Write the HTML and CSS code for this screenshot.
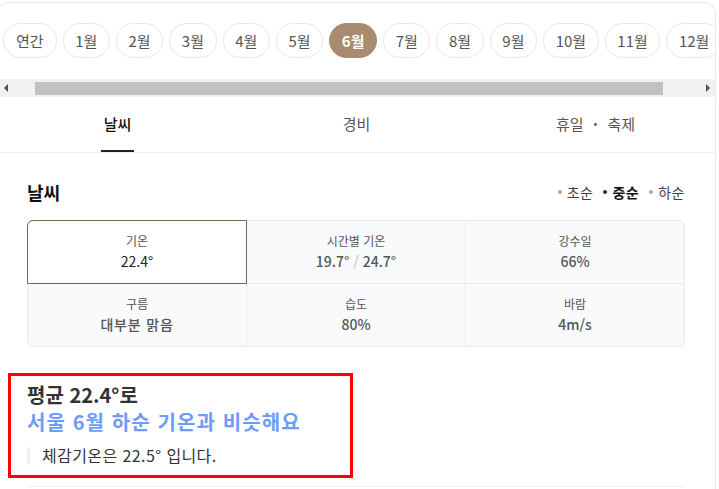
FILE: index.html
```html
<!DOCTYPE html>
<html lang="ko">
<head>
<meta charset="utf-8">
<title>날씨</title>
<link rel="stylesheet" href="styles.css">
</head>
<body>
<div class="panel">
  <div class="months">
    <div class="pills">
      <span class="pill pill-year">연간</span>
      <span class="pill">1월</span>
      <span class="pill">2월</span>
      <span class="pill">3월</span>
      <span class="pill">4월</span>
      <span class="pill">5월</span>
      <span class="pill pill-active">6월</span>
      <span class="pill">7월</span>
      <span class="pill">8월</span>
      <span class="pill">9월</span>
      <span class="pill">10월</span>
      <span class="pill">11월</span>
      <span class="pill">12월</span>
    </div>
  </div>
  <div class="scrollbar">
    <span class="sb-btn"><i class="tri tri-left"></i></span>
    <span class="sb-track"><span class="sb-thumb"></span></span>
    <span class="sb-btn"><i class="tri tri-right"></i></span>
  </div>
  <nav class="tabs">
    <div class="tab"><span class="tab-label tab-active">날씨</span></div>
    <div class="tab"><span class="tab-label">경비</span></div>
    <div class="tab"><span class="tab-label">휴일<span class="sep">·</span>축제</span></div>
  </nav>
  <section class="weather">
    <div class="weather-head">
      <h2 class="title">날씨</h2>
      <ul class="periods">
        <li class="period">초순</li>
        <li class="period period-active">중순</li>
        <li class="period">하순</li>
      </ul>
    </div>
    <div class="stats">
      <div class="cell cell-selected"><span class="label">기온</span><span class="value">22.4°</span></div>
      <div class="cell"><span class="label">시간별 기온</span><span class="value">19.7° <span class="slash">/</span> 24.7°</span></div>
      <div class="cell cell-tr"><span class="label">강수일</span><span class="value">66%</span></div>
      <div class="cell cell-bl"><span class="label">구름</span><span class="value value-wide">대부분 맑음</span></div>
      <div class="cell"><span class="label">습도</span><span class="value">80%</span></div>
      <div class="cell cell-br"><span class="label">바람</span><span class="value">4m/s</span></div>
    </div>
    <div class="summary">
      <p class="summary-line">평균 22.4°로</p>
      <p class="summary-line summary-blue">서울 6월 하순 기온과 비슷해요</p>
      <p class="quote">체감기온은 22.5° 입니다.</p>
    </div>
    <div class="divider"></div>
  </section>
</div>
</body>
</html>
```
FILE: styles.css
```css
html, body {
  margin: 0;
  padding: 0;
  overflow: hidden;
  background: #ffffff;
}
body {
  font-family: "Noto Sans CJK KR", "Noto Sans", sans-serif;
  color: #333;
}
.panel {
  box-sizing: border-box;
  width: 719px;
  min-height: 600px;
  margin: 2px 0 0 -3px;
  border: 1px solid #e6e8eb;
  border-bottom: none;
  border-radius: 12px 12px 0 0;
  background: #fff;
}
.months {
  overflow: hidden;
  padding: 20px 0 21px 5px;
}
.pills {
  display: flex;
  gap: 6px;
  flex-wrap: nowrap;
}
.pill {
  flex: none;
  height: 33px;
  line-height: 33px;
  padding: 0 11.6px;
  border: 1px solid #e8e8e8;
  border-radius: 18px;
  font-size: 15px;
  color: #555;
  background: #fff;
}
.pill-year {
  padding: 0 12px;
}
.pill-active {
  background: #a98b6f;
  border-color: #a98b6f;
  color: #fff;
  font-weight: 700;
}
.scrollbar {
  display: flex;
  height: 18px;
  background: #f1f1f1;
}
.sb-btn {
  flex: none;
  width: 17px;
  display: flex;
  align-items: center;
  justify-content: center;
}
.sb-track {
  flex: 1;
  display: flex;
  align-items: center;
}
.sb-thumb {
  margin-left: 20px;
  width: 628px;
  height: 13px;
  background: #c1c1c1;
}
.tri {
  width: 0;
  height: 0;
  border-top: 4px solid transparent;
  border-bottom: 4px solid transparent;
}
.tri-left {
  border-right: 4px solid #505050;
  margin-right: 2px;
}
.tri-right {
  border-left: 4px solid #505050;
  margin-left: 2px;
}
.tabs {
  display: grid;
  grid-template-columns: 1fr 1fr 1fr;
  height: 55px;
  border-bottom: 1px solid #eceef0;
}
.tab {
  display: flex;
  justify-content: center;
  height: 55px;
}
.tab-label {
  box-sizing: border-box;
  display: flex;
  align-items: center;
  height: 55px;
  padding: 0 3px;
  font-size: 15px;
  color: #555;
  border-bottom: 2px solid transparent;
}
.sep {
  display: inline-block;
  width: 24px;
  text-align: center;
  font-weight: 700;
}
.tab-active {
  color: #111;
  font-weight: 500;
  border-bottom-color: #222;
}
.weather {
  padding: 26px 30px 0 29px;
}
.weather-head {
  display: flex;
  align-items: center;
  justify-content: space-between;
  height: 26px;
}
.title {
  margin: 0;
  font-size: 18px;
  font-weight: 700;
  line-height: 26px;
  color: #111;
}
.periods {
  display: flex;
  gap: 10px;
  margin: 0;
  padding: 0;
  list-style: none;
}
.period {
  display: flex;
  align-items: center;
  font-size: 14px;
  letter-spacing: 0.5px;
  color: #444;
}
.period::before {
  content: "";
  width: 4px;
  height: 4px;
  border-radius: 50%;
  background: #aaa;
  margin-right: 5px;
}
.period-active {
  color: #111;
  font-weight: 700;
}
.period-active::before {
  background: #333;
}
.stats {
  display: grid;
  grid-template-columns: 1fr 1fr 1fr;
  grid-template-rows: 62px 62px;
  gap: 1px;
  margin-top: 15px;
  border: 1px solid #e9eaec;
  border-radius: 6px;
  background: #e9eaec;
}
.cell {
  display: flex;
  flex-direction: column;
  align-items: center;
  justify-content: center;
  gap: 2px;
  background: #f9fafb;
}
.cell-selected {
  position: relative;
  background: #fff;
  outline: 1px solid #7d6450;
  border-top-left-radius: 5px;
}
.cell-tr { border-top-right-radius: 5px; }
.cell-bl { border-bottom-left-radius: 5px; }
.cell-br { border-bottom-right-radius: 5px; }
.label {
  font-size: 12px;
  line-height: 17px;
  color: #555;
}
.value {
  font-size: 14px;
  line-height: 21px;
  font-weight: 500;
  color: #555;
}
.value-wide {
  letter-spacing: 0.8px;
}
.cell-selected .value {
  font-weight: 400;
  color: #222;
}
.slash {
  color: #bbb;
  font-weight: 400;
}
.summary {
  box-sizing: border-box;
  width: 345px;
  margin: 26px 0 0 -19px;
  padding: 5px 16px 11px 16px;
  border: 3px solid #ff0000;
}
.summary-line {
  margin: 0;
  font-size: 20px;
  line-height: 27px;
  font-weight: 700;
  color: #333;
}
.summary-blue {
  color: #6b9cf8;
  letter-spacing: 1.1px;
}
.quote {
  margin: 12px 0 0 0;
  padding-left: 12px;
  border-left: 3px solid #eeeff1;
  font-size: 16px;
  line-height: 17px;
  letter-spacing: 0.4px;
  color: #333;
}
.divider {
  margin-top: 8px;
  border-top: 1px solid #eeeff1;
}
```
